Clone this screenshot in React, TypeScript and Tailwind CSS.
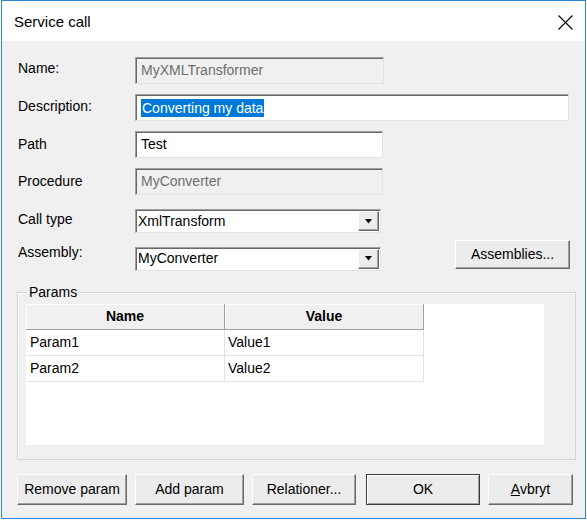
import React from "react";

const sunken =
  "border border-[#a0a0a0] border-b-[#e3e3e3] border-r-[#e3e3e3] shadow-[inset_1px_1px_0_#696969]";
const raised =
  "border border-[#ffffff] border-b-[#696969] border-r-[#696969] shadow-[inset_-1px_-1px_0_#a0a0a0] bg-[#ececec]";

function Label({ text, mt = 0 }: { text: string; mt?: number }) {
  return (
    <div className="w-[117px] shrink-0 text-[14px] text-black" style={{ marginTop: mt }}>
      {text}
    </div>
  );
}

function TextField({
  value,
  disabled,
  width,
  selected,
}: {
  value: string;
  disabled?: boolean;
  width: number;
  selected?: boolean;
}) {
  return (
    <div
      className={`h-[27px] flex items-center pl-[5px] ${sunken} ${disabled ? "bg-[#f0f0f0] text-[#6d6d6d]" : "bg-white text-black"}`}
      style={{ width }}
    >
      {selected ? (
        <span className="bg-[#0078d7] text-white px-[1px] leading-[18px]">{value}</span>
      ) : (
        <span>{value}</span>
      )}
    </div>
  );
}

function Combo({ value }: { value: string }) {
  return (
    <div className={`h-[24px] w-[246px] flex items-center bg-white ${sunken}`}>
      <span className="flex-1 pl-[2px] text-black">{value}</span>
      <div className={`w-[21px] h-[20px] mr-[1px] flex items-center justify-center ${raised}`}>
        <svg width="9" height="5" viewBox="0 0 9 5">
          <path d="M1 0 H8 L4.5 4.5 Z" fill="#000" />
        </svg>
      </div>
    </div>
  );
}

function Btn({
  children,
  width,
  height = 31,
  primary,
}: {
  children: React.ReactNode;
  width: number;
  height?: number;
  primary?: boolean;
}) {
  return (
    <div
      className={
        primary
          ? "flex items-center justify-center bg-[#ececec] border border-[#3c3c3c] shadow-[inset_1px_1px_0_#ffffff,inset_-1px_-1px_0_#a0a0a0] text-black"
          : `flex items-center justify-center text-black ${raised}`
      }
      style={{ width, height }}
    >
      {children}
    </div>
  );
}

export default function App() {
  const rows = [
    ["Param1", "Value1"],
    ["Param2", "Value2"],
  ];

  return (
    <div className="w-[587px] h-[522px] bg-white font-['Liberation_Sans',Arial,sans-serif] text-[14px]">
      <div className="ml-[1px] w-[585px] h-[519px] border border-[#2a86d8] flex flex-col bg-[#f0f0f0]">
        {/* title bar */}
        <div className="h-[40px] bg-white flex items-center justify-between pl-[12px] pr-[12px] shrink-0">
          <span className="text-[15px] text-black mt-[3px]">Service call</span>
          <svg width="15" height="15" viewBox="0 0 15 15" className="mt-[3px]">
            <path d="M0.5 0.5 L14.5 14.5 M14.5 0.5 L0.5 14.5" stroke="#000" strokeWidth="1.1" />
          </svg>
        </div>

        <div className="flex flex-col pl-[16px]">
          <div className="flex items-center mt-[16px]">
            <Label text="Name:" mt={-5} />
            <TextField value="MyXMLTransformer" disabled width={249} />
          </div>
          <div className="flex items-center mt-[10px]">
            <Label text="Description:" mt={-2} />
            <TextField value="Converting my data" selected width={434} />
          </div>
          <div className="flex items-center mt-[10px]">
            <Label text="Path" mt={-1} />
            <TextField value="Test" width={248} />
          </div>
          <div className="flex items-center mt-[10px]">
            <Label text="Procedure" mt={-1} />
            <TextField value="MyConverter" disabled width={248} />
          </div>
          <div className="flex items-center mt-[14px]">
            <Label text="Call type" mt={-4} />
            <Combo value="XmlTransform" />
          </div>
          <div className="flex items-center mt-[8px] h-[29px]">
            <Label text="Assembly:" mt={-6} />
            <div className="mt-[6px]">
              <Combo value="MyConverter" />
            </div>
            <div className="ml-[74px] mt-[-2px]">
              <Btn width={115} height={29}>
                Assemblies...
              </Btn>
            </div>
          </div>

          {/* Params group */}
          <div className="relative mt-[22px] ml-[-1px] w-[559px] h-[168px] border border-[#d5d5d5] shadow-[inset_1px_1px_0_#ffffff] pt-[11px] pl-[8px]">
            <span className="absolute left-[9px] top-[-10px] px-[2px] bg-[#f0f0f0] text-black leading-[18px]">
              Params
            </span>
            <div className="w-[518px] h-[141px] bg-white">
              <div className="flex h-[26px]">
                <div className="w-[199px] flex items-center justify-center font-bold bg-[#f0f0f0] border-r border-b border-[#a0a0a0] shadow-[inset_1px_1px_0_#ffffff]">
                  Name
                </div>
                <div className="w-[199px] flex items-center justify-center font-bold bg-[#f0f0f0] border-r border-b border-[#a0a0a0] shadow-[inset_1px_1px_0_#ffffff]">
                  Value
                </div>
              </div>
              {rows.map(([n, v]) => (
                <div key={n} className="flex h-[26px]">
                  <div className="w-[199px] flex items-center pl-[4px] border-r border-b border-[#e3e3e3]">
                    {n}
                  </div>
                  <div className="w-[199px] flex items-center pl-[3px] border-r border-b border-[#e3e3e3]">
                    {v}
                  </div>
                </div>
              ))}
            </div>
          </div>

          {/* buttons */}
          <div className="flex items-center mt-[14px] ml-[-1px]">
            <Btn width={110}>Remove param</Btn>
            <div className="ml-[8px]">
              <Btn width={109}>Add param</Btn>
            </div>
            <div className="ml-[8px]">
              <Btn width={104}>Relationer...</Btn>
            </div>
            <div className="ml-[10px]">
              <Btn width={114} primary>
                OK
              </Btn>
            </div>
            <div className="ml-[8px]">
              <Btn width={85}>
                <span>
                  <span className="underline">A</span>vbryt
                </span>
              </Btn>
            </div>
          </div>
        </div>
      </div>
    </div>
  );
}
